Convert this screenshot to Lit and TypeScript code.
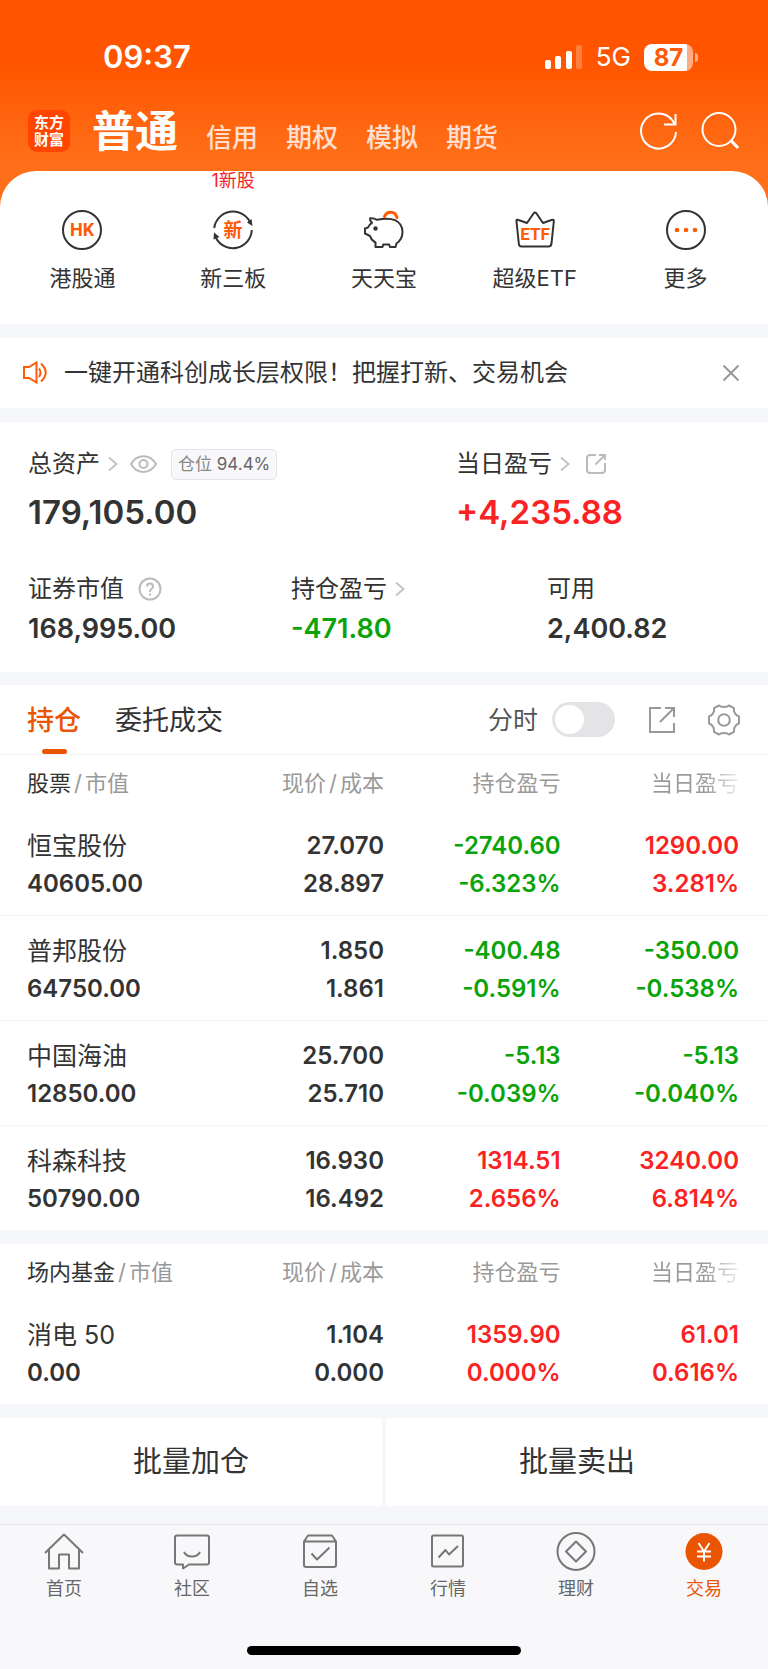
import { LitElement, html, svg, css, nothing } from "lit";
import { customElement, state } from "lit/decorators.js";

type Row = { name: string; value: string; price: string; cost: string; pl: string; plPct: string; day: string; dayPct: string };

const stocks: Row[] = [
  { name: "恒宝股份", value: "40605.00", price: "27.070", cost: "28.897", pl: "-2740.60", plPct: "-6.323%", day: "1290.00", dayPct: "3.281%" },
  { name: "普邦股份", value: "64750.00", price: "1.850", cost: "1.861", pl: "-400.48", plPct: "-0.591%", day: "-350.00", dayPct: "-0.538%" },
  { name: "中国海油", value: "12850.00", price: "25.700", cost: "25.710", pl: "-5.13", plPct: "-0.039%", day: "-5.13", dayPct: "-0.040%" },
  { name: "科森科技", value: "50790.00", price: "16.930", cost: "16.492", pl: "1314.51", plPct: "2.656%", day: "3240.00", dayPct: "6.814%" },
];
const funds: Row[] = [
  { name: "消电 50", value: "0.00", price: "1.104", cost: "0.000", pl: "1359.90", plPct: "0.000%", day: "61.01", dayPct: "0.616%" },
];

const tone = (v: string) => (v.startsWith("-") ? "down" : "up");

const chevron = html`<svg class="chev" width="10" height="16" viewBox="0 0 10 16"><path d="M1 1.5 8.5 8 1 14.5" /></svg>`;

const quick = [
  {
    label: "港股通",
    icon: svg`<circle cx="20" cy="20" r="19" /><text class="hot" x="20" y="26" font-size="18">HK</text>`,
  },
  {
    label: "新三板",
    badge: "1新股",
    icon: svg`<path d="M1.2 18A19 19 0 0 1 37 12M38.8 20A19 19 0 0 1 3 28" /><path class="dark" d="M34 12.500 38.500 9 39.500 16zM6.500 27 .5 29.500 1 22.500z" /><text class="hot" x="20" y="27" font-size="19">新</text>`,
  },
  {
    label: "天天宝",
    icon: svg`<path d="M6.200 8.200C8.500 8 11 8.500 13 9.800 19 8.500 27 8.500 31 10.200 36 12.500 38.500 16.500 38.500 22 38.500 27 36 31 32.500 33.500L31.500 37H26L25.200 34.500H19.200L18.500 37H11.500V32.500C8.500 31 7 29 6 26L1 23.500V18.500L4 17.500C4.800 15.500 6 14 8 12.800 6.500 11.500 5.800 10 6.200 8.200z" /><circle class="dark" cx="11.500" cy="18.500" r="2.200" /><path class="line-hot" d="M20.500 6.500C22.500 1 31 0 33 7.500" />`,
  },
  {
    label: "超级ETF",
    icon: svg`<path d="M1.500 11.500Q1 9 3.500 10L12 13 18.500 3.500Q20 1.500 21.500 3.500L28 13 36.500 10Q39.200 9 38.800 11.500L36.500 33.500Q36 36.500 33.500 36.500H6.500Q4 36.500 3.800 33.500z" /><text class="hot" x="20" y="30" font-size="17">ETF</text>`,
  },
  {
    label: "更多",
    icon: svg`<circle cx="20" cy="20" r="19" /><circle class="dot" cx="11" cy="20" r="2.300" /><circle class="dot" cx="20" cy="20" r="2.300" /><circle class="dot" cx="29" cy="20" r="2.300" />`,
  },
];

const nav = [
  { label: "首页", icon: svg`<path d="M1 20 20 1.500 39 20M5 17V35.500H15V21.500H25V35.500H35V17" />` },
  { label: "社区", icon: svg`<path d="M5 2.500H35Q37 2.500 37 4.500V29.500Q37 31.500 35 31.500H17L11 35.500V31.500H5Q3 31.500 3 29.500V4.500Q3 2.500 5 2.500zM12 19C15 25 25 25 28 19" />` },
  { label: "自选", icon: svg`<path d="M4 8.500H36V32Q36 34 34 34H6Q4 34 4 32zM4 8.500 8 2.500H32L36 8.500M11.500 20.500 17 26.500 29.500 14.500" />` },
  { label: "行情", icon: svg`<rect x="4" y="2.500" width="31" height="31" rx="1.500" /><path d="M10.500 24.500 17.500 17 21 21.500 30 13" />` },
  { label: "理财", icon: svg`<circle cx="20" cy="18.500" r="18.500" /><path d="M20 8.500 30 18.500 20 28.500 10 18.500z" />` },
  { label: "交易", active: true, icon: svg`<circle class="disc" cx="20" cy="18.500" r="18.500" /><path class="yen" d="M14.500 10 20 18.500 25.500 10M13 18.500H27M13 23.500H27M20 18.500V28.500" />` },
];

@customElement("app-root")
export class AppRoot extends LitElement {
  @state() private timeline = false;

  static styles = css`
    :host {
      display: block;
      background: #f6f7fa;
      color: #333;
      font-family: Inter, "Noto Sans CJK SC", sans-serif;
      font-size: 24px;
      line-height: 32px;
    }
    * { box-sizing: border-box; }
    button { font: inherit; color: inherit; background: none; border: 0; padding: 0; margin: 0; cursor: pointer; }
    a { color: inherit; text-decoration: none; }
    svg { display: block; fill: none; flex: none; overflow: visible; }
    .hero { background: linear-gradient(#ff5500 64px, #ff6e18 158px); }
    .status { display: flex; align-items: center; justify-content: space-between; color: #fff; padding: 37px 70px 0 103px; }
    .time { font-size: 31px; font-weight: 600; line-height: 40px; }
    .signals { display: flex; align-items: center; gap: 13px; font-size: 26px; }
    .battery { display: flex; align-items: center; gap: 2px; }
    .cell { width: 49px; height: 27px; border-radius: 8px; background: linear-gradient(90deg, #fff 43px, #ffab84 43px); color: #ff5a06; font-size: 24px; line-height: 27px; font-weight: 700; text-align: center; }
    .tip { width: 3px; height: 9px; border-radius: 0 4px 4px 0; background: #ffab84; }
    .top { display: flex; align-items: center; padding: 24px 29px 10px 28px; height: 94px; color: #fff; }
    .logo { width: 42px; height: 42px; border-radius: 9px; background: #ff4500; font-size: 15px; line-height: 17px; font-weight: 700; text-align: center; padding: 4px 5px; margin-right: 22px; }
    .modes { display: flex; align-items: flex-end; gap: 28px; flex: 1; }
    .mode { font-size: 26px; line-height: 34px; color: #ffe0d0; font-weight: 500; }
    .mode.on { font-size: 43px; line-height: 48px; color: #fff; font-weight: 600; }
    .tools { display: flex; gap: 22px; stroke: #fff; stroke-width: 2; }
    .panel { background: #fff; border-radius: 36px 36px 0 0; height: 153px; padding: 39px 7px 0; display: grid; grid-template-columns: repeat(5, 1fr); align-items: start; }
    .quick { position: relative; display: flex; flex-direction: column; align-items: center; gap: 12px; font-size: 22px; }
    .quick svg { stroke: #333; stroke-width: 2; stroke-linejoin: round; }
    .quick text { fill: #ff5a05; stroke: none; text-anchor: middle; font-family: Roboto, "Noto Sans CJK SC", sans-serif; font-weight: 700; }
    .quick .dark { fill: #333; stroke: none; }
    .quick .line-hot { stroke: #ff5a05; stroke-width: 3; stroke-linecap: round; }
    .quick .dot { fill: #ff5a05; stroke: none; }
    .badge { position: absolute; top: -39px; left: 0; right: 0; text-align: center; font-size: 18px; line-height: 20px; color: #f5222d; }
    .notice { background: #fff; margin-top: 14px; height: 70px; padding: 0 28px 0 22px; display: flex; align-items: center; }
    .notice p { margin: 0 0 0 16px; flex: 1; }
    .assets { background: #fff; margin-top: 14px; height: 250px; padding: 26px 28px 0; }
    .major { display: grid; grid-template-columns: 428px 1fr; }
    .minor { display: grid; grid-template-columns: 263px 256px 1fr; margin-top: 41px; }
    .lbl { display: flex; align-items: center; height: 32px; }
    .chev { stroke: #c4c4c4; stroke-width: 2; margin-left: 8px; }
    .eye { margin-left: 12px; stroke: #bbb; stroke-width: 2; }
    .share { margin-left: 16px; stroke: #bbb; stroke-width: 2; }
    .ask { margin-left: 14px; stroke: #bbb; stroke-width: 2; }
    .pos { margin-left: 14px; border: 1px solid #e4e5e8; border-radius: 5px; background: #f8f8fb; color: #888; font-size: 17px; line-height: 29px; padding: 0 6px; }
    .pos b { font-weight: 400; color: #666; }
    .big { font-size: 33px; line-height: 40px; font-weight: 600; margin-top: 12px; }
    .mid { font-size: 27px; line-height: 32px; font-weight: 600; margin-top: 8px; }
    .up { color: #fa2222; }
    .down { color: #0aa30a; }
    .tabs { background: #fff; margin-top: 13px; height: 70px; border-bottom: 1px solid #f3f3f5; padding: 0 28px 0 27px; display: flex; align-items: stretch; font-size: 27px; }
    .tab { display: flex; align-items: center; margin-right: 34px; padding-top: 2px; position: relative; }
    .tab.on { color: #ea5504; font-weight: 500; }
    .tab.on::after { content: ""; position: absolute; left: 50%; bottom: 0; width: 25px; height: 5px; margin-left: -12px; border-radius: 3px; background: #ea5504; }
    .tabtools { margin-left: auto; display: flex; align-items: center; color: #555; stroke: #999; stroke-width: 2; }
    .tabtools label { font-size: 25px; margin-right: 14px; }
    .switch { appearance: none; width: 63px; height: 35px; border-radius: 18px; margin: 0 33px 0 0; background: #e4e4e6; padding: 3px; display: flex; cursor: pointer; }
    .switch::before { content: ""; width: 29px; height: 29px; border-radius: 50%; background: #fff; }
    .switch:checked { background: #ea5504; justify-content: flex-end; }
    .tabtools button + button { margin-left: 32px; }
    table { width: 100%; table-layout: fixed; border-collapse: separate; border-spacing: 0; background: #fff; }
    .c1 { width: 30%; } .c2 { width: 20%; } .c3 { width: 23%; } .c4 { width: 27%; }
    th { height: 56px; padding: 0; font-size: 22px; font-weight: 400; color: #999; text-align: right; }
    th:first-child, td:first-child { text-align: left; padding-left: 27px; }
    th:last-child, td:last-child { padding-right: 29px; }
    th b { font-weight: 400; color: #333; }
    .sep { margin: 0 3px; }
    .fade { background: linear-gradient(90deg, #999 calc(100% - 34px), #eee); background-clip: text; color: transparent; }
    td { height: 105px; padding: 4px 0 0; text-align: right; font-weight: 600; line-height: 38px; border-bottom: 1px solid #f5f5f7; white-space: nowrap; }
    tr:last-child td { height: 104px; border-bottom: 0; }
    .name { font-size: 25px; font-weight: 400; }
    .funds { margin-top: 14px; }
    td div { height: 38px; }
    .bulk { display: grid; grid-template-columns: 1fr 1fr; gap: 4px; margin-top: 14px; }
    .bulk button { background: #fff; height: 88px; font-size: 29px; }
    nav { margin-top: 18px; background: #f8f8fb; border-top: 1px solid #e6e6e8; height: 145px; padding-top: 8px; display: flex; flex-direction: column; }
    .items { display: grid; grid-template-columns: repeat(6, 1fr); }
    .item { display: flex; flex-direction: column; align-items: center; gap: 4px; font-size: 18px; line-height: 28px; color: #666; }
    .item svg { stroke: #777; stroke-width: 2; stroke-linejoin: round; }
    .item.on { color: #ea5504; }
    .item .disc { fill: #ea5504; stroke: none; }
    .item .yen { stroke: #fff; }
    .home { width: 274px; height: 9px; border-radius: 5px; background: #000; margin: auto auto 14px; }
  `;

  private table(kind: string, rows: Row[], cls: string) {
    return html`<table class=${cls}>
      <colgroup><col class="c1" /><col class="c2" /><col class="c3" /><col class="c4" /></colgroup>
      <thead>
        <tr>
          <th scope="col"><b>${kind}</b><span class="sep">/</span>市值</th>
          <th scope="col">现价<span class="sep">/</span>成本</th>
          <th scope="col">持仓盈亏</th>
          <th scope="col"><span class="fade">当日盈亏</span></th>
        </tr>
      </thead>
      <tbody>
        ${rows.map(
          (r) => html`<tr>
            <td><div class="name">${r.name}</div><div>${r.value}</div></td>
            <td><div>${r.price}</div><div>${r.cost}</div></td>
            <td class=${tone(r.pl)}><div>${r.pl}</div><div>${r.plPct}</div></td>
            <td class=${tone(r.day)}><div>${r.day}</div><div>${r.dayPct}</div></td>
          </tr>`
        )}
      </tbody>
    </table>`;
  }

  render() {
    return html`
      <div class="hero">
        <div class="status">
          <span class="time">09:37</span>
          <div class="signals">
            <svg width="38" height="25" viewBox="0 0 38 25">
              <rect x="0" y="15" width="6" height="9" rx="2" fill="#fff" />
              <rect x="10" y="11" width="6" height="13" rx="2" fill="#fff" />
              <rect x="21" y="6" width="6" height="18" rx="2" fill="#fff" />
              <rect x="31" y="0" width="6" height="24" rx="2" fill="#fff" opacity=".25" />
            </svg>
            <span>5G</span>
            <div class="battery"><div class="cell">87</div><div class="tip"></div></div>
          </div>
        </div>
        <header class="top">
          <div class="logo">东方<br />财富</div>
          <div class="modes">
            <button class="mode on">普通</button>
            ${["信用", "期权", "模拟", "期货"].map((m) => html`<button class="mode">${m}</button>`)}
          </div>
          <div class="tools">
            <button aria-label="刷新">
              <svg width="40" height="40" viewBox="0 0 40 40"><path d="M37 21A17.500 17.500 0 1 1 33.500 9.500L36 13.500M36.500 3V13.500H25" /></svg>
            </button>
            <button aria-label="搜索">
              <svg width="38" height="40" viewBox="0 0 38 40"><circle cx="18" cy="18.500" r="16.500" /><path d="M29.500 29 37 37" stroke-width="3" /></svg>
            </button>
          </div>
        </header>
        <section class="panel">
          ${quick.map(
            (q) => html`<a class="quick" href="#">
              ${q.badge ? html`<span class="badge">${q.badge}</span>` : nothing}
              <svg width="40" height="40" viewBox="0 0 40 40">${q.icon}</svg>
              <span>${q.label}</span>
            </a>`
          )}
        </section>
      </div>

      <section class="notice">
        <svg width="26" height="24" viewBox="0 0 26 24" stroke="#ff5a05" stroke-width="2">
          <path d="M2 6H7L14.500 1.500V21.500L7 17H2zM17 7.500Q20 11.500 17 16M19 2.500Q28.500 11.500 19 20.500" />
        </svg>
        <p>一键开通科创成长层权限！把握打新、交易机会</p>
        <button aria-label="关闭">
          <svg width="18" height="18" viewBox="0 0 18 18" stroke="#999" stroke-width="2"><path d="M1.500 1.500 16.500 16.500M16.500 1.500 1.500 16.500" /></svg>
        </button>
      </section>

      <section class="assets">
        <div class="major">
          <div>
            <div class="lbl">
              总资产${chevron}
              <svg class="eye" width="27" height="18" viewBox="0 0 27 18"><path d="M1 9C7-1.500 20-1.500 26 9 20 19.500 7 19.500 1 9z" /><circle cx="13.500" cy="9" r="4" /></svg>
              <span class="pos">仓位 <b>94.4%</b></span>
            </div>
            <div class="big">179,105.00</div>
          </div>
          <div>
            <div class="lbl">
              当日盈亏${chevron}
              <svg class="share" width="20" height="20" viewBox="0 0 20 20"><path d="M10 1H4Q1 1 1 4V16Q1 19 4 19H16Q19 19 19 16V9M9.500 10.500 18.500 1.500M13 1H19V6" /></svg>
            </div>
            <div class="big up">+4,235.88</div>
          </div>
        </div>
        <div class="minor">
          <div>
            <div class="lbl">
              证券市值
              <svg class="ask" width="24" height="24" viewBox="0 0 24 24"><circle cx="12" cy="12" r="10.500" /><path d="M9 9.500Q9 6.500 12 6.500 15 6.500 15 9.500 15 11 13.500 12 12 13 12 15M12 16.500V18.500" /></svg>
            </div>
            <div class="mid">168,995.00</div>
          </div>
          <div>
            <div class="lbl">持仓盈亏${chevron}</div>
            <div class="mid down">-471.80</div>
          </div>
          <div>
            <div class="lbl">可用</div>
            <div class="mid">2,400.82</div>
          </div>
        </div>
      </section>

      <section class="tabs">
        <button class="tab on">持仓</button>
        <button class="tab">委托成交</button>
        <div class="tabtools">
          <label for="timeline">分时</label>
          <input class="switch" id="timeline" type="checkbox" .checked=${this.timeline} @change=${() => (this.timeline = !this.timeline)} />
          <button aria-label="分享">
            <svg width="28" height="28" viewBox="0 0 28 28"><path d="M13 2H2V26H26V17M12 16 25.500 2.500M17 2H26V11" /></svg>
          </button>
          <button aria-label="设置">
            <svg width="32" height="32" viewBox="0 0 32 32"><path d="M11 1.500C13 3.500 19 3.500 21 1.500L26 4.200C25.300 7.500 27.500 11.500 31 12.500V19.500C27.500 20.500 25.300 24.500 26 27.800L21 30.500C19 28.500 13 28.500 11 30.500L6 27.800C6.700 24.500 4.500 20.500 1 19.500V12.500C4.500 11.500 6.700 7.500 6 4.200z" stroke-linejoin="round" /><circle cx="16" cy="16" r="5.800" /></svg>
          </button>
        </div>
      </section>

      ${this.table("股票", stocks, "stocks")} ${this.table("场内基金", funds, "funds")}

      <div class="bulk">
        <button>批量加仓</button>
        <button>批量卖出</button>
      </div>

      <nav>
        <div class="items">
          ${nav.map(
            (n) => html`<a class="item ${n.active ? "on" : ""}" href="#">
              <svg width="40" height="38" viewBox="0 0 40 38">${n.icon}</svg>
              <span>${n.label}</span>
            </a>`
          )}
        </div>
        <div class="home"></div>
      </nav>
    `;
  }
}
